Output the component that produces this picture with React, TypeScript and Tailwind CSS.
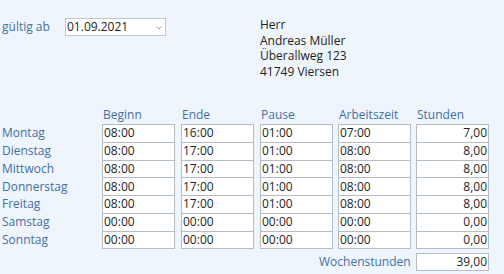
import React from "react";

/* =======================
   DATA
======================= */

type Day = {
  name: string;
  beginn: string;
  ende: string;
  pause: string;
  arbeitszeit: string;
  stunden: string;
};

const days: Day[] = [
  { name: "Montag", beginn: "08:00", ende: "16:00", pause: "01:00", arbeitszeit: "07:00", stunden: "7,00" },
  { name: "Dienstag", beginn: "08:00", ende: "17:00", pause: "01:00", arbeitszeit: "08:00", stunden: "8,00" },
  { name: "Mittwoch", beginn: "08:00", ende: "17:00", pause: "01:00", arbeitszeit: "08:00", stunden: "8,00" },
  { name: "Donnerstag", beginn: "08:00", ende: "17:00", pause: "01:00", arbeitszeit: "08:00", stunden: "8,00" },
  { name: "Freitag", beginn: "08:00", ende: "17:00", pause: "01:00", arbeitszeit: "08:00", stunden: "8,00" },
  { name: "Samstag", beginn: "00:00", ende: "00:00", pause: "00:00", arbeitszeit: "00:00", stunden: "0,00" },
  { name: "Sonntag", beginn: "00:00", ende: "00:00", pause: "00:00", arbeitszeit: "00:00", stunden: "0,00" },
];

/* =======================
   FIELD
======================= */

function Field({ value, right }: { value: string; right?: boolean }) {
  return (
    <div
      className={`flex h-full w-[73px] items-center border border-[#b4bcc6] bg-white px-[1px] text-[#1e1e1e] ${
        right ? "justify-end" : "justify-start"
      }`}
    >
      {value}
    </div>
  );
}

/* =======================
   PAGE
======================= */

export default function App() {
  const label = "text-[#4470a2]";

  return (
    <div
      className="h-[274px] w-[504px] overflow-hidden bg-[#eef5fd] text-[12px] leading-none"
      style={{ fontFamily: '"Open Sans", "Noto Sans", sans-serif' }}
    >
      {/* ===== HEADER ===== */}
      <div className="flex pt-[18px]">
        <div className={`flex h-[18px] w-[65px] items-center pl-[2px] ${label}`}>
          gültig ab
        </div>
        <div className="flex h-[18px] w-[101px] items-center justify-between border border-[#c3c7cc] bg-white pl-[1px] pr-[3px] text-[#1e1e1e]">
          <span>01.09.2021</span>
          <svg width="6" height="4" viewBox="0 0 6 4" className="mt-[1px]">
            <path d="M0.5 0.5 L3 3 L5.5 0.5" fill="none" stroke="#a0a0a0" strokeWidth="1" />
          </svg>
        </div>
        <div className="-mt-[1px] ml-[94px] flex flex-col leading-[15.5px] text-[#1e1e1e]">
          <span>Herr</span>
          <span>Andreas Müller</span>
          <span>Überallweg 123</span>
          <span>41749 Viersen</span>
        </div>
      </div>

      {/* ===== TABLE ===== */}
      <div className="mt-[26px]">
        <div className="grid h-[19px] grid-cols-[102px_79px_79px_78px_78px_73px] items-center">
          <span />
          <span className={`pl-[1px] ${label}`}>Beginn</span>
          <span className={`pl-[1px] ${label}`}>Ende</span>
          <span className={`pl-[1px] ${label}`}>Pause</span>
          <span className={`pl-[1px] ${label}`}>Arbeitszeit</span>
          <span className={`pl-[1px] ${label}`}>Stunden</span>
        </div>

        {days.map((d, i) => (
          <div
            key={d.name}
            className={`grid h-[18.75px] grid-cols-[102px_79px_79px_78px_78px_73px] ${
              i > 0 ? "-mt-[1px]" : ""
            }`}
          >
            <span className={`flex items-center pl-[2px] ${label}`}>{d.name}</span>
            <Field value={d.beginn} />
            <Field value={d.ende} />
            <Field value={d.pause} />
            <Field value={d.arbeitszeit} />
            <Field value={d.stunden} right />
          </div>
        ))}

        <div className="mt-[4px] grid h-[18px] grid-cols-[319px_97px_73px]">
          <span />
          <span className={`flex items-center ${label}`}>Wochenstunden</span>
          <Field value="39,00" right />
        </div>
      </div>
    </div>
  );
}
